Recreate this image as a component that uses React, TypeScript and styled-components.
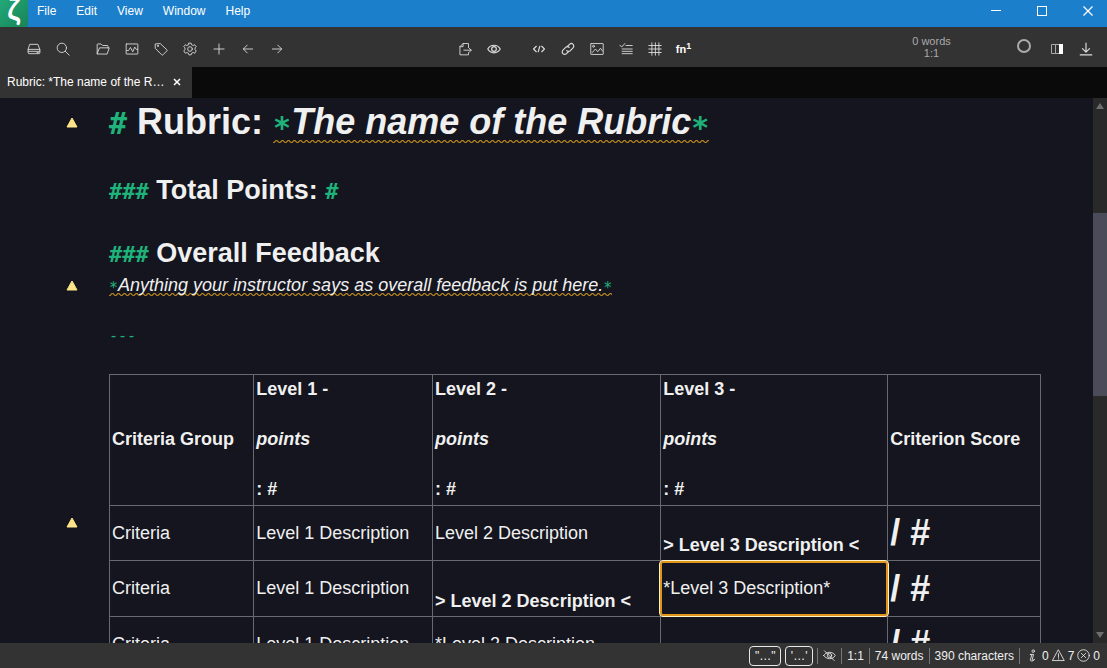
import React from "react";
import styled, { createGlobalStyle, css } from "styled-components";

const sans = `"Liberation Sans", Arial, sans-serif`;

const GlobalStyle = createGlobalStyle`
  * { box-sizing: border-box; }
  html, body, #root { height: 100%; }
  body { margin: 0; background: #14151e; color: #f0f0f0; font-family: ${sans}; font-size: 12px; }
  button { font: inherit; color: inherit; background: none; border: 0; padding: 0; margin: 0; }
  h1, h3, p { margin: 0; }
`;

const Window = styled.div`
  display: flex;
  flex-direction: column;
  height: 100vh;
  overflow: hidden;
`;

/* Title bar */
const TitleBar = styled.header`
  display: flex;
  flex: none;
  height: 27px;
  background: #1c7fcb;
  color: #fff;
`;

const Logo = styled.div`
  width: 28px;
  height: 27px;
  overflow: hidden;
  border-bottom-right-radius: 3px;
  background: linear-gradient(135deg, #23a878, #178457);
  font: bold 29px/20px ${sans};
  text-align: center;
`;

const Menu = styled.nav`
  display: flex;
  height: 22px;
  flex: 1;
`;

const MenuItem = styled.button`
  padding: 0 10px;
  &:first-child { padding-left: 9px; }
`;

const WindowControls = styled.div`
  display: flex;
  gap: 8px;
  height: 22px;
`;

const WindowButton = styled.button`
  display: flex;
  align-items: center;
  justify-content: center;
  width: 38px;
`;

/* Toolbar */
const Toolbar = styled.div`
  display: flex;
  flex: none;
  align-items: stretch;
  height: 40px;
  padding: 0 7px 0 19px;
  background: #333333;
  color: #dcdcdc;
`;

const ToolGroup = styled.div<{ $before?: number }>`
  display: flex;
  flex: none;
  margin-left: ${(p) => p.$before ?? 0}px;
`;

const ToolButton = styled.button`
  display: flex;
  align-items: center;
  justify-content: center;
  width: 29px;
  padding-top: 3px;
`;

const RingButton = styled(ToolButton)`
  width: 32px;
  padding: 0 4px 2px 0;
`;

const Footnote = styled.span`
  color: #fff;
  font: bold 11px/14px ${sans};
  sup { font-size: 9px; line-height: 1; vertical-align: 4px; }
`;

const Spacer = styled.div<{ $grow: number }>`
  flex: ${(p) => p.$grow} 1 0;
`;

const Counter = styled.div`
  flex: none;
  width: 55px;
  padding-top: 8px;
  color: #aaaaaa;
  font-size: 11px;
  line-height: 12px;
  text-align: center;
`;

/* Tabs */
const TabBar = styled.div`
  flex: none;
  display: flex;
  height: 31px;
  background: #0a0a0a;
`;

const Tab = styled.div`
  display: flex;
  align-items: center;
  justify-content: space-between;
  width: 192px;
  padding: 0 11px 2px 7px;
  background: #333333;
  color: #fff;
`;

const TabClose = styled.button`
  display: flex;
  align-items: center;
`;

/* Editor */
const EditorArea = styled.div`
  display: flex;
  flex: 1;
  min-height: 0;
`;

const Document = styled.main`
  flex: 1;
  overflow: hidden;
  padding-right: 52px;
  font-size: 18px;
  line-height: 25px;
`;

const Block = styled.section<{ $gap?: number }>`
  display: grid;
  grid-template-columns: 109px minmax(0, 1fr);
  margin-bottom: ${(p) => p.$gap ?? 0}px;
`;

const Gutter = styled.div<{ $top: number }>`
  display: flex;
  align-items: flex-start;
  padding: ${(p) => p.$top}px 0 0 66px;
`;

const Title = styled.h1`
  font-size: 36px;
  line-height: 48px;
`;

const Subtitle = styled.h3`
  font-size: 27px;
  line-height: 38px;
`;

const Mark = styled.span<{ $size: number }>`
  color: #1fb27a;
  font-family: "DejaVu Sans Mono", monospace;
  font-size: ${(p) => p.$size}px;
  line-height: 1;
`;

const Star = styled(Mark)<{ $drop: number }>`
  vertical-align: -${(p) => p.$drop}px;
`;

const Squiggle = styled.em`
  padding-bottom: 1px;
  background: url("data:image/svg+xml,%3Csvg xmlns='http://www.w3.org/2000/svg' width='6' height='3'%3E%3Cpath d='M0 2.5L1 2.5L3 .5L4 .5L6 2.5' fill='none' stroke='%23b8851f' stroke-width='1.1'/%3E%3C/svg%3E")
    left bottom repeat-x;
`;

const Table = styled.table`
  width: 100%;
  border-collapse: collapse;
  table-layout: fixed;
`;

const cell = css`
  height: 55px;
  padding: 2px;
  border: 1px solid #696a70;
  text-align: left;
  vertical-align: middle;
`;

const HeadCell = styled.th`
  ${cell}
  padding-bottom: 3px;
`;

const Levels = styled.div`
  display: grid;
  gap: 25px;
`;

const Cell = styled.td<{ $selected?: boolean }>`
  ${cell}
  ${(p) =>
    p.$selected &&
    css`
      position: relative;
      height: 56px;
      padding: 2px;
      &::after {
        content: "";
        position: absolute;
        inset: -1px -2px;
        border: 1px solid #fdf3c4;
        border-radius: 4px;
        box-shadow: inset 0 0 0 2px #e0941a;
      }
    `}
`;

const Chosen = styled.div`
  padding-top: 25px;
  font-weight: bold;
`;

const Score = styled.div`
  font-size: 36px;
  font-weight: bold;
  line-height: 50px;
`;

const ScrollTrack = styled.div`
  display: flex;
  flex-direction: column;
  align-items: center;
  flex: none;
  width: 14px;
  padding: 5px 0;
  background: #292929;
`;

const ScrollThumb = styled.div`
  flex: 183 0 0;
  width: 14px;
  background: #4b4c5a;
`;

/* Status bar */
const StatusBar = styled.footer`
  display: flex;
  flex: none;
  align-items: center;
  justify-content: flex-end;
  height: 25px;
  padding-right: 7px;
  background: #333333;
  color: #f0f0f0;
`;

const QuoteButton = styled.button<{ $width: number }>`
  width: ${(p) => p.$width}px;
  height: 20px;
  margin-right: 4px;
  border: 1px solid #e8e8e8;
  border-radius: 4px;
  line-height: 18px;
`;

const StatusItem = styled.span`
  display: flex;
  align-items: center;
  height: 16px;
  padding: 0 5px;
  border-left: 1px solid #777777;
`;

const Diagnostics = styled(StatusItem)`
  gap: 3px;
  padding: 0 0 0 6px;
`;

type IconProps = { size?: number; width?: number; children: React.ReactNode };
const Icon = ({ size = 14, width = 2.3, children }: IconProps) => (
  <svg width={size} height={size} viewBox="0 0 36 36" fill="none" stroke="currentColor" strokeWidth={width} strokeLinejoin="round" strokeLinecap="round">
    {children}
  </svg>
);

const icons = {
  drive: <><path d="M8 6h20l5 13v9a2 2 0 0 1-2 2H5a2 2 0 0 1-2-2v-9z" /><path d="M3 19h30M3 24h30M26 27h3" /></>,
  search: <><circle cx="15" cy="15" r="12" /><path d="M24 24l10 10" /></>,
  folder: <path d="M3 30V7a2 2 0 0 1 2-2h8l4 4h12a2 2 0 0 1 2 2v4M3 30l6-15h25l-5 15z" />,
  stats: <><rect x="3" y="5" width="30" height="26" rx="1" /><path d="M5 22h4l5-8 6 11 5-12 4 6h3" /></>,
  tag: <><path d="M4 5l12-1 17 16a2 2 0 0 1 0 3L23 33a2 2 0 0 1-3 0L4 17z" /><circle cx="10" cy="10" r="1.5" /></>,
  gear: <><path d="M15 3h6l1 4 4 2 4-2 4 5-3 3v5l3 3-4 6-4-2-4 2-1 4h-6l-1-4-4-2-4 2-4-6 3-3v-5l-3-3 4-5 4 2 4-2z" /><circle cx="18" cy="18" r="6" /></>,
  plus: <path d="M18 5v26M5 18h26" />,
  left: <path d="M30 18H6M16 8L6 18l10 10" />,
  right: <path d="M6 18h24M20 8l10 10-10 10" />,
  exportDoc: <><path d="M27 14V4H13L5 12v21h22v-5" /><path d="M13 4v8H5M15 21h19M28 15l6 6-6 6" /></>,
  eye: <><path d="M2 18C9 5 27 5 34 18 27 31 9 31 2 18z" /><circle cx="18" cy="18" r="6" /></>,
  code: <path d="M11 11l-7 7 7 7M25 11l7 7-7 7M20 11l-4 14" />,
  link: <><path d="M17 11l5-5a6 6 0 0 1 9 9l-7 7a6 6 0 0 1-9 0" /><path d="M19 25l-5 5a6 6 0 0 1-9-9l7-7a6 6 0 0 1 9 0" /></>,
  image: <><rect x="2" y="4" width="32" height="28" rx="1" /><circle cx="9" cy="11" r="2.5" /><path d="M6 27l8-9 6 7 7-9 5 7" /></>,
  tasks: <path d="M2 8l5 5 8-9M18 9h16M8 18h26M8 24h26M8 30h26" />,
  hash: <path d="M10 2v32M19 2v32M28 2v32M2 9h32M2 18h32M2 27h32" />,
  download: <path d="M18 3v22M9 17l9 9 9-9M3 33h30" />,
  eyeOff: <><path d="M2 18C9 6 27 6 34 18 27 30 9 30 2 18zM4 5l27 27" /><circle cx="18" cy="18" r="6" /></>,
  info: <><circle cx="20" cy="6" r="3.5" /><path d="M12 15h9l-4 15c0 2 3 1 6-1M12 15c0 3 3 2 4 2l-4 13c0 5 8 4 11 0" /></>,
  warning: <path d="M18 3l16 29H2zM18 13v10M18 27v1" />,
  error: <><circle cx="18" cy="18" r="16" /><path d="M12 12l12 12M24 12L12 24" /></>,
};

const Tool = ({ name, label, width }: { name: keyof typeof icons; label: string; width?: number }) => (
  <ToolButton aria-label={label}><Icon width={width}>{icons[name]}</Icon></ToolButton>
);

const LintMarker = () => (
  <svg width="12" height="11" viewBox="0 0 12 11" role="img" aria-label="Warning">
    <path d="M6 1L11 10H1z" fill="#fde486" stroke="#fde486" strokeLinejoin="round" />
  </svg>
);

const ScrollArrow = ({ down }: { down?: boolean }) => (
  <svg width="8" height="6" viewBox="0 0 8 6">
    <path d={down ? "M0 0h8L4 6z" : "M0 6h8L4 0z"} fill="#6e6e6e" />
  </svg>
);

const LevelHead = ({ level }: { level: number }) => (
  <HeadCell>
    <Levels>
      <span>Level {level} -</span>
      <em>points</em>
      <span>: #</span>
    </Levels>
  </HeadCell>
);

const columns = ["15.5%", "19.2%", "24.5%", "24.4%", "16.4%"];

export default function App() {
  return (
    <>
      <GlobalStyle />
      <Window>
        <TitleBar>
          <Logo>ζ</Logo>
          <Menu>
            {["File", "Edit", "View", "Window", "Help"].map((m) => <MenuItem key={m}>{m}</MenuItem>)}
          </Menu>
          <WindowControls>
            <WindowButton aria-label="Minimize"><svg width="10" height="10"><path d="M0 4.500h10" stroke="#fff" /></svg></WindowButton>
            <WindowButton aria-label="Maximize"><svg width="10" height="10"><rect x=".5" y=".5" width="9" height="9" fill="none" stroke="#fff" /></svg></WindowButton>
            <WindowButton aria-label="Close"><svg width="10" height="10"><path d="M.5.5l9 9M9.500.5l-9 9" stroke="#fff" strokeWidth="1.300" /></svg></WindowButton>
          </WindowControls>
        </TitleBar>

        <Toolbar>
          <ToolGroup>
            <Tool name="drive" label="File manager" />
            <Tool name="search" label="Search" />
          </ToolGroup>
          <ToolGroup $before={11}>
            <Tool name="folder" label="Open" />
            <Tool name="stats" label="Statistics" />
            <Tool name="tag" label="Tags" />
            <Tool name="gear" label="Preferences" />
            <Tool name="plus" label="New file" />
            <Tool name="left" label="Back" />
            <Tool name="right" label="Forward" />
          </ToolGroup>
          <Spacer $grow={159} />
          <ToolGroup>
            <Tool name="exportDoc" label="Export" />
            <Tool name="eye" label="Readability" width={3} />
          </ToolGroup>
          <ToolGroup $before={16}>
            <Tool name="code" label="Code" width={3} />
            <Tool name="link" label="Link" width={3} />
            <Tool name="image" label="Image" />
            <Tool name="tasks" label="Task list" />
            <Tool name="hash" label="Table" />
            <ToolButton aria-label="Footnote"><Footnote>fn<sup>1</sup></Footnote></ToolButton>
          </ToolGroup>
          <Spacer $grow={206} />
          <Counter>0 words<br />1:1</Counter>
          <Spacer $grow={51} />
          <ToolGroup>
            <RingButton aria-label="Pomodoro timer">
              <svg width="14" height="14"><circle cx="7" cy="7" r="6" fill="none" stroke="#aaa" strokeWidth="2" /></svg>
            </RingButton>
            <ToolButton aria-label="Sidebar">
              <svg width="12" height="10"><path d="M.5.5h11v9H.5zM4.500 0v10" fill="none" stroke="#aaa" /><path d="M8 0h4v10H8z" fill="#fff" /></svg>
            </ToolButton>
            <Tool name="download" label="Updates" width={3} />
          </ToolGroup>
        </Toolbar>

        <TabBar>
          <Tab>
            <span>Rubric: *The name of the R…</span>
            <TabClose aria-label="Close tab">
              <svg width="8" height="8"><path d="M1 1l6 6M7 1L1 7" stroke="#fff" strokeWidth="1.500" /></svg>
            </TabClose>
          </Tab>
        </TabBar>

        <EditorArea>
          <Document>
            <Block $gap={25}>
              <Gutter $top={19}><LintMarker /></Gutter>
              <Title>
                <Mark $size={30}>#</Mark> Rubric:{" "}
                <Squiggle><Star $size={30} $drop={4}>*</Star>The name of the Rubric<Star $size={30} $drop={4}>*</Star></Squiggle>
              </Title>
            </Block>
            <Block $gap={25}>
              <Gutter $top={0} />
              <Subtitle><Mark $size={22}>###</Mark> Total Points: <Mark $size={22}>#</Mark></Subtitle>
            </Block>
            <Block $gap={1}>
              <Gutter $top={0} />
              <Subtitle><Mark $size={22}>###</Mark> Overall Feedback</Subtitle>
            </Block>
            <Block $gap={25}>
              <Gutter $top={7}><LintMarker /></Gutter>
              <p>
                <Squiggle><Star $size={15} $drop={2}>*</Star>Anything your instructor says as overall feedback is put here.<Star $size={15} $drop={2}>*</Star></Squiggle>
              </p>
            </Block>
            <Block $gap={26}>
              <Gutter $top={0} />
              <p><Mark $size={15}>---</Mark></p>
            </Block>
            <Block>
              <Gutter $top={143}><LintMarker /></Gutter>
              <Table>
                <colgroup>{columns.map((w, i) => <col key={i} width={w} />)}</colgroup>
                <thead>
                  <tr>
                    <HeadCell>Criteria Group</HeadCell>
                    <LevelHead level={1} />
                    <LevelHead level={2} />
                    <LevelHead level={3} />
                    <HeadCell>Criterion Score</HeadCell>
                  </tr>
                </thead>
                <tbody>
                  <tr>
                    <Cell>Criteria</Cell>
                    <Cell>Level 1 Description</Cell>
                    <Cell>Level 2 Description</Cell>
                    <Cell><Chosen>&gt; Level 3 Description &lt;</Chosen></Cell>
                    <Cell><Score>/ #</Score></Cell>
                  </tr>
                  <tr>
                    <Cell>Criteria</Cell>
                    <Cell>Level 1 Description</Cell>
                    <Cell><Chosen>&gt; Level 2 Description &lt;</Chosen></Cell>
                    <Cell $selected>*Level 3 Description*</Cell>
                    <Cell><Score>/ #</Score></Cell>
                  </tr>
                  <tr>
                    <Cell>Criteria</Cell>
                    <Cell>Level 1 Description</Cell>
                    <Cell>*Level 2 Description</Cell>
                    <Cell />
                    <Cell><Score>/ #</Score></Cell>
                  </tr>
                </tbody>
              </Table>
            </Block>
          </Document>
          <ScrollTrack>
            <ScrollArrow />
            <Spacer $grow={104} />
            <ScrollThumb />
            <Spacer $grow={236} />
            <ScrollArrow down />
          </ScrollTrack>
        </EditorArea>

        <StatusBar>
          <QuoteButton $width={32}>"…"</QuoteButton>
          <QuoteButton $width={28}>'…'</QuoteButton>
          <StatusItem><Icon size={13}>{icons.eyeOff}</Icon></StatusItem>
          <StatusItem>1:1</StatusItem>
          <StatusItem>74 words</StatusItem>
          <StatusItem>390 characters</StatusItem>
          <Diagnostics>
            <Icon size={13}>{icons.info}</Icon>0
            <Icon size={13}>{icons.warning}</Icon>7
            <Icon size={13}>{icons.error}</Icon>0
          </Diagnostics>
        </StatusBar>
      </Window>
    </>
  );
}
